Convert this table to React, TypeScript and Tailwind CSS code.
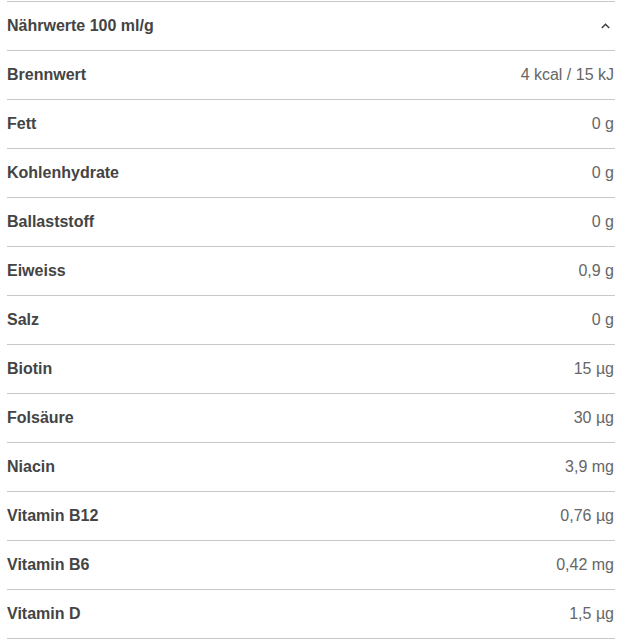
import React from "react";

const rows: [string, string][] = [
  ["Brennwert", "4 kcal / 15 kJ"],
  ["Fett", "0 g"],
  ["Kohlenhydrate", "0 g"],
  ["Ballaststoff", "0 g"],
  ["Eiweiss", "0,9 g"],
  ["Salz", "0 g"],
  ["Biotin", "15 µg"],
  ["Folsäure", "30 µg"],
  ["Niacin", "3,9 mg"],
  ["Vitamin B12", "0,76 µg"],
  ["Vitamin B6", "0,42 mg"],
  ["Vitamin D", "1,5 µg"],
];

export default function App() {
  return (
    <div className="bg-white w-[629px] h-[640px] pt-px pl-[7px] font-['Liberation_Sans',Arial,sans-serif]">
      <div className="w-[608px] border-t border-[#c8c8c8]">
        <div className="h-[49px] flex items-center justify-between border-b border-[#c8c8c8]">
          <span className="text-[16px] font-bold text-[#444]">Nährwerte 100 ml/g</span>
          <svg width="9" height="6" viewBox="0 0 9 6" className="mr-[5px]">
            <path d="M0.8 5 L4.5 1.3 L8.2 5" fill="none" stroke="#444" strokeWidth="1.6" />
          </svg>
        </div>
        {rows.map(([k, v]) => (
          <div key={k} className="h-[49px] flex items-center justify-between border-b border-[#c8c8c8]">
            <span className="text-[16px] font-bold text-[#444] -mt-px">{k}</span>
            <span className="text-[16px] text-[#666] -mt-px mr-px">{v}</span>
          </div>
        ))}
      </div>
    </div>
  );
}
